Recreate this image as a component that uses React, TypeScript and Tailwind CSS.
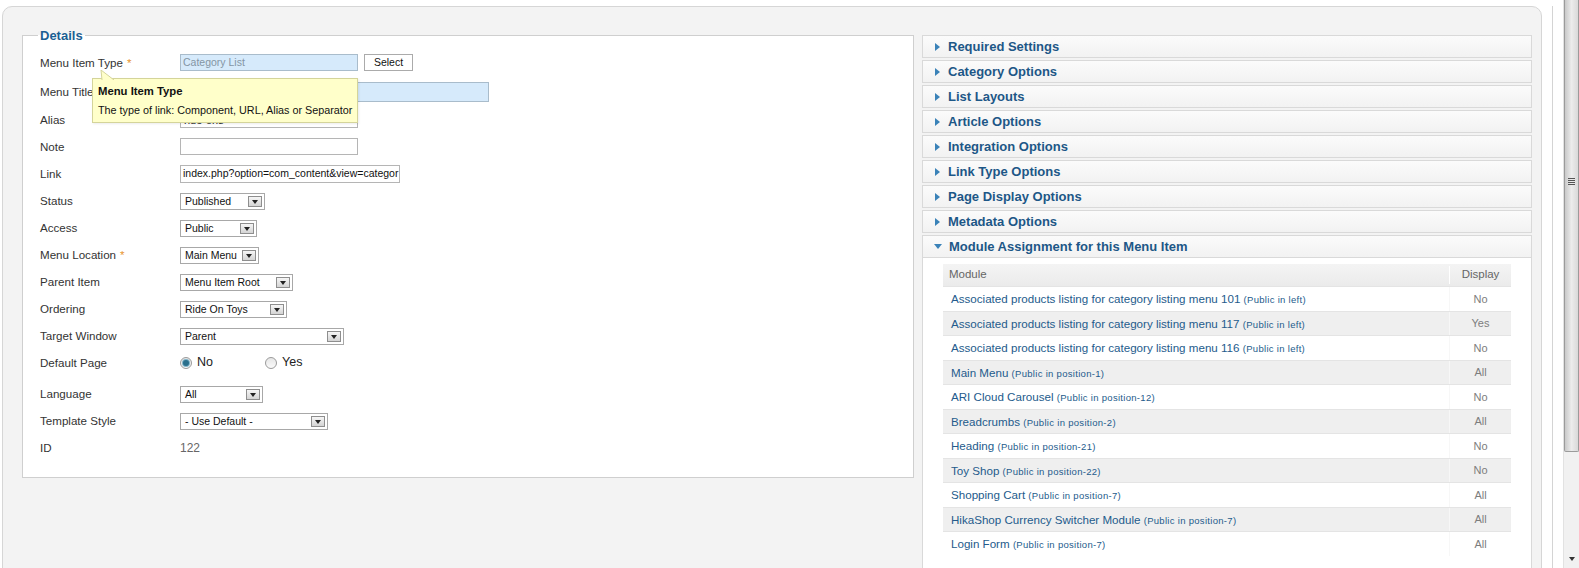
import React from 'react';

// Menu item edit screen: details fieldset, option panes and module assignment table

type Module = { name: string; where: string; display: string };

const modules: Module[] = [
  { name: 'Associated products listing for category listing menu 101', where: '(Public in left)', display: 'No' },
  { name: 'Associated products listing for category listing menu 117', where: '(Public in left)', display: 'Yes' },
  { name: 'Associated products listing for category listing menu 116', where: '(Public in left)', display: 'No' },
  { name: 'Main Menu', where: '(Public in position-1)', display: 'All' },
  { name: 'ARI Cloud Carousel', where: '(Public in position-12)', display: 'No' },
  { name: 'Breadcrumbs', where: '(Public in position-2)', display: 'All' },
  { name: 'Heading', where: '(Public in position-21)', display: 'No' },
  { name: 'Toy Shop', where: '(Public in position-22)', display: 'No' },
  { name: 'Shopping Cart', where: '(Public in position-7)', display: 'All' },
  { name: 'HikaShop Currency Switcher Module', where: '(Public in position-7)', display: 'All' },
  { name: 'Login Form', where: '(Public in position-7)', display: 'All' },
];

const panes = [
  'Required Settings',
  'Category Options',
  'List Layouts',
  'Article Options',
  'Integration Options',
  'Link Type Options',
  'Page Display Options',
  'Metadata Options',
];

const Row = ({
  label,
  required,
  className = '',
  children,
}: {
  label: string;
  required?: boolean;
  className?: string;
  children?: React.ReactNode;
}) => (
  <div className={`flex h-[27px] items-center pl-[2px] ${className}`}>
    <div className="w-[140px] shrink-0 text-[11.6px] text-[#333]">
      {label}
      {required && <span className="ml-[4px] text-[#e8962e]">*</span>}
    </div>
    {children}
  </div>
);

const Dropdown = ({ value, className }: { value: string; className: string }) => (
  <div className={`mt-[2px] flex h-[17px] items-center justify-between border border-[#a8a8a8] bg-white pl-[4px] pr-[2px] text-[10.5px] text-[#111] ${className}`}>
    <span className="whitespace-nowrap pt-[1px]">{value}</span>
    <span className="flex h-[11px] w-[14px] items-center justify-center border border-[#8e8e8e] bg-gradient-to-b from-[#f6f6f6] to-[#d4d4d4]">
      <span className="h-0 w-0 border-x-[3.5px] border-t-[4px] border-x-transparent border-t-[#222]" />
    </span>
  </div>
);

const Radio = ({ checked, label }: { checked?: boolean; label: string }) => (
  <div className="flex items-center gap-[5px]">
    <span className="flex h-[12px] w-[12px] items-center justify-center rounded-full border border-[#9a9a9a] bg-gradient-to-b from-[#e6e6e6] to-[#fafafa]">
      {checked && <span className="h-[6px] w-[6px] rounded-full bg-[#2a6f8c] ring-1 ring-[#7fb3c8]" />}
    </span>
    <span className="text-[12.5px] text-[#222]">{label}</span>
  </div>
);

const Arrow = ({ open }: { open?: boolean }) =>
  open ? (
    <span className="h-0 w-0 border-x-[4px] border-t-[5px] border-x-transparent border-t-[#3a82b8]" />
  ) : (
    <span className="h-0 w-0 border-y-[4px] border-l-[5px] border-y-transparent border-l-[#3a82b8]" />
  );

export default function App() {
  return (
    <div className="relative flex h-[568px] w-[1579px] overflow-hidden bg-white font-['Liberation_Sans',Arial,sans-serif]">
      <div className="flex w-[1563px] pl-[2px] pt-[6px]">
        {/* main panel */}
        <div className="flex h-[620px] w-[1540px] shrink-0 items-start gap-[8px] rounded-t-[10px] border border-[#d6d6d6] bg-[#f3f3f3] pl-[19px] pt-[21px]">
          <fieldset className="h-[450px] w-[892px] shrink-0 border border-[#cfcfcf] bg-white pl-[15px] pt-[6px]">
            <legend className="px-[2px] text-[13px] leading-[15px] font-bold text-[#1b5f93]">Details</legend>

            <Row label="Menu Item Type" required>
              <div className="flex items-center gap-[6px]">
                <div className="flex h-[17px] w-[178px] items-center border border-[#a9bccb] bg-[#d6eafb] px-[2px] text-[10.5px] text-[#8495a4]">
                  Category List
                </div>
                <div className="flex h-[17px] w-[49px] items-center justify-center border border-[#ababab] bg-white text-[10.5px] text-[#111]">
                  Select
                </div>
              </div>
            </Row>
            <Row label="Menu Title" required className="mt-[2px]">
              <div className="flex h-[20px] w-[309px] items-center border border-[#a9bccb] bg-[#d6eafb] px-[3px] text-[11px] text-[#222]">
                Ride Ons
              </div>
            </Row>
            <Row label="Alias" className="mt-[1px]">
              <div className="flex h-[17px] w-[178px] items-end border border-[#b5b5b5] bg-white px-[3px] text-[11px] leading-[14px] text-[#222]">
                ride-ons
              </div>
            </Row>
            <Row label="Note">
              <div className="h-[17px] w-[178px] border border-[#b5b5b5] bg-white" />
            </Row>
            <Row label="Link">
              <div className="flex h-[18px] w-[220px] items-center overflow-hidden whitespace-nowrap border border-[#b5b5b5] bg-white px-[2px] text-[10.5px] text-[#111]">
                index.php?option=com_content&amp;view=categor
              </div>
            </Row>
            <Row label="Status">
              <Dropdown value="Published" className="w-[85px]" />
            </Row>
            <Row label="Access">
              <Dropdown value="Public" className="w-[77px]" />
            </Row>
            <Row label="Menu Location" required>
              <Dropdown value="Main Menu" className="w-[79px]" />
            </Row>
            <Row label="Parent Item">
              <Dropdown value="Menu Item Root" className="w-[113px]" />
            </Row>
            <Row label="Ordering">
              <Dropdown value="Ride On Toys" className="w-[107px]" />
            </Row>
            <Row label="Target Window">
              <Dropdown value="Parent" className="w-[164px]" />
            </Row>
            <Row label="Default Page">
              <div className="flex items-center gap-[52px]">
                <Radio checked label="No" />
                <Radio label="Yes" />
              </div>
            </Row>
            <Row label="Language" className="mt-[4px]">
              <Dropdown value="All" className="w-[83px]" />
            </Row>
            <Row label="Template Style">
              <Dropdown value="- Use Default -" className="w-[148px]" />
            </Row>
            <Row label="ID">
              <span className="text-[12px] text-[#666]">122</span>
            </Row>
          </fieldset>

          {/* option panes */}
          <div className="mt-[7px] flex w-[610px] shrink-0 flex-col gap-[2px]">
            {panes.map((p) => (
              <div
                key={p}
                className="flex h-[23px] items-center gap-[8px] border border-[#d9d9d9] bg-gradient-to-b from-[#fbfbfb] to-[#f2f2f2] pl-[12px]"
              >
                <Arrow />
                <span className="text-[13px] font-bold text-[#1d5787]">{p}</span>
              </div>
            ))}
            <div className="border border-[#d9d9d9] bg-white">
              <div className="flex h-[22px] items-center gap-[7px] border-b border-[#d9d9d9] bg-gradient-to-b from-[#fbfbfb] to-[#f2f2f2] pl-[11px]">
                <Arrow open />
                <span className="text-[13px] font-bold text-[#1d5787]">Module Assignment for this Menu Item</span>
              </div>
              <div className="px-[20px] pb-[20px] pt-[6px]">
                <div className="flex h-[22px] items-center bg-gradient-to-b from-[#f4f4f4] to-[#ebebeb] text-[11.5px] text-[#666]">
                  <div className="flex-1 pl-[6px]">Module</div>
                  <div className="w-[62px] border-l border-white text-center">Display</div>
                </div>
                {modules.map((m, i) => (
                  <div
                    key={m.name + i}
                    className={`flex h-[24.5px] items-center border-t border-[#e4e4e4] ${i % 2 === 1 ? 'bg-[#efefef]' : 'bg-white'}`}
                  >
                    <div className="flex-1 whitespace-nowrap pl-[8px] text-[11.6px] text-[#245b8c]">
                      {m.name} <span className="text-[9.5px] tracking-[0.3px]">{m.where}</span>
                    </div>
                    <div className="flex h-full w-[62px] items-center justify-center border-l border-[#f7f7f7] text-[11px] text-[#7d7d7d]">
                      {m.display}
                    </div>
                  </div>
                ))}
              </div>
            </div>
          </div>
        </div>
        <div className="w-[10px] shrink-0" />
        <div className="h-full w-[11px] shrink-0 border-l border-[#d4d4d4]" />
      </div>

      {/* page scrollbar */}
      <div className="flex h-full w-[16px] shrink-0 flex-col border-l border-[#e2e2e2] bg-[#f1f1f1]">
        <div className="flex h-[452px] flex-col items-center justify-end rounded-b-[2px] border border-t-0 border-[#9b9b9b] bg-gradient-to-r from-[#c9c9c9] via-[#ececec] to-[#d9d9d9] pb-[266px]">
          <div className="flex flex-col gap-[1px]">
            <span className="h-px w-[7px] bg-[#555]" />
            <span className="h-px w-[7px] bg-[#555]" />
            <span className="h-px w-[7px] bg-[#555]" />
            <span className="h-px w-[7px] bg-[#555]" />
          </div>
        </div>
        <div className="flex flex-1 items-end justify-center pb-[7px]">
          <span className="h-0 w-0 border-x-[3.5px] border-t-[4px] border-x-transparent border-t-[#333]" />
        </div>
      </div>

      {/* hover tip for Menu Item Type */}
      <div className="absolute left-[92px] top-[78px] w-[266px] border border-[#d4d49a] bg-[#ffffca] px-[5px] pb-[5px] pt-[5px] shadow-[1px_1px_2px_rgba(0,0,0,0.08)]">
        <svg className="absolute -top-[9px] left-[6px]" width="16" height="10" viewBox="0 0 16 10">
          <polygon points="2,0 3,10 15,10" fill="#ffffca" />
          <polyline points="3,10 2,0 15,10" fill="none" stroke="#d4d49a" strokeWidth="1" />
        </svg>
        <div className="text-[11.3px] font-bold leading-[14px] text-[#111]">Menu Item Type</div>
        <div className="mt-[5px] whitespace-nowrap text-[10.8px] leading-[14px] text-[#111]">
          The type of link: Component, URL, Alias or Separator
        </div>
      </div>
    </div>
  );
}
